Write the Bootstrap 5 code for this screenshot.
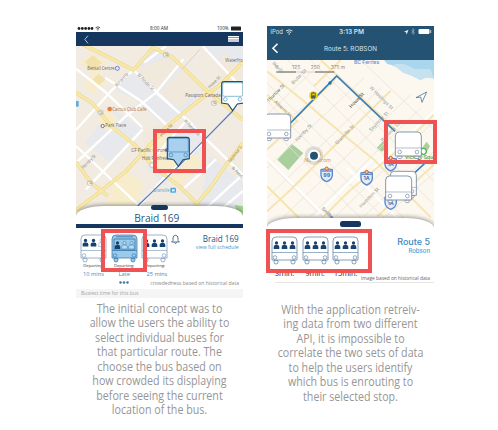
<!DOCTYPE html>
<html lang="en">
<head>
<meta charset="utf-8">
<meta name="viewport" content="width=device-width, initial-scale=1">
<title>Transit app concepts</title>
<link href="https://cdn.jsdelivr.net/npm/bootstrap@5.3.0/dist/css/bootstrap.min.css" rel="stylesheet">
<style>
body{font-family:"Open Sans","Noto Sans",sans-serif;width:498px;height:430px;overflow:hidden;background:#fff}
svg{display:block}
svg text{font-family:"Open Sans","Noto Sans",sans-serif}
.ios text{font-family:Inter,sans-serif}
.board{padding:25px 0 0 76px;gap:24px}
.concept{width:167px}
.screen{height:273px;line-height:1}
.status-a{height:7px}
.bar-a{height:14px;background:#14365f}
.menu-bars{margin-right:-4px}
.map-a{height:160px}
.map-b{height:158px}
.bar-b{height:34px;margin-top:1px;background:#235273}
.sheet{border-radius:28px 28px 0 0/10px 10px 0 0;background:#fff;box-shadow:0 -1px 4px #0006;clip-path:inset(-5px 0 0 0)}
.sheet-b{height:66px;padding-top:3px}
.handle{width:17px;height:4.5px;border-radius:2.5px;background:#14365f}
.handle-a{margin-bottom:-.5px;transform:translateY(-1px)}
.handle-b{width:21px;height:5.5px}
.sheet-title{font-size:11.3px;color:#265782;height:13.5px;line-height:16px;padding-right:6px;transform:scaleX(.9)}
.rule-a{height:4.5px;background:#14365f}
.info-a{height:61px;padding:6px 4px 0 4px}
.busiest{height:9px;line-height:9px;font-size:5.1px;background:#f5f5f5;color:#a3a3a3;padding-left:5px}
.departure{width:27px;margin-right:3.7px}
.departure svg{width:27px;height:29px}
.departure svg.dots{width:10px;height:3px;margin:2px 8px}
.dep-label{font-size:4.2px;line-height:6px;color:#333;white-space:nowrap}
.dep-time{font-size:5.7px;line-height:10px;color:#3c8dc4;white-space:nowrap}
.bell{margin-left:-1px}
.right-a{font-size:9px;color:#265782;transform:scaleX(.9);transform-origin:right}
.right-a small{font-size:5.8px;color:#3f97cc;margin-top:1.5px}
.note{font-size:5.05px;color:#888}
.note-a{bottom:-1px}
.note-b{top:49px;padding-right:4px;font-size:4.85px;color:#666}
.frame{position:absolute;border:4px solid #ee5253}
.fr1{left:77px;top:104px;width:53px;height:44px}
.fr2{left:25px;top:204px;width:46px;height:43px}
.fr3{left:117px;top:94px;width:53px;height:44px}
.fr4{left:-1px;top:203px;width:106px;height:44px}
.info-b{padding:9px 4px 0 4px;height:55px}
.dep-b{width:27px;margin-right:3.5px}
.dep-b svg{width:27px;height:30px}
.min-b{font-size:7.6px;line-height:9px;margin-top:3.5px;color:#222;letter-spacing:-.1px}
.route-b{font-size:9px;color:#3c8abd;font-family:Inter,sans-serif;font-weight:500;padding-top:1px}
.route-b small{font-size:6px;color:#3fa3da;margin-top:2.5px}
.hairline{height:1px;background:#e6e6e6;margin:0 0 0 8px}
.caption-copy{font-size:12px;line-height:14.45px;color:#969696;white-space:nowrap;margin:4px -30px 0;transform:scaleX(.89)}
</style>
<script src="https://cdn.jsdelivr.net/npm/bootstrap@5.3.0/dist/js/bootstrap.bundle.min.js"></script>
</head>
<body>
<svg width="0" height="0" class="position-absolute" aria-hidden="true">
<defs>
<g id="person"><circle cx="3" cy="2" r="1.65"/><path d="M.2 8V5.7Q.2 4 2 4H4Q5.8 4 5.8 5.7V8Z"/></g>
<g id="shell"><path d="M1 24V5Q1 1 5 1H22Q26 1 26 5V24Z" stroke-width=".7"/><path d="M1 16.5H26" stroke-width=".6"/><circle cx="4" cy="21.5" r="1.8" stroke-width=".6"/><circle cx="23" cy="21.5" r="1.8" stroke-width=".6"/><path d="M3 24.5h4v1.5q0 2-2 2t-2-2zM20 24.5h4v1.5q0 2-2 2t-2-2z" stroke-width=".7"/></g>
<g id="full"><use href="#person" x="2.500" y="5"/><use href="#person" x="10.500" y="5"/><use href="#person" x="18.500" y="5"/></g>
<g id="mapbus"><path d="M1 73V13Q1 1 13 1H67Q79 1 79 13V73Z" stroke-width="2.600"/><path d="M1 49H79" stroke-width="1.600"/><circle cx="14" cy="61" r="5.500" stroke-width="2"/><circle cx="66" cy="61" r="5.500" stroke-width="2"/><path d="M8 74h13v3q0 4-6 4t-7-4zM59 74h13v3q0 4-6 4t-7-4z" stroke-width="2.200"/></g>
<g id="pin"><path d="M9 2H61Q68 2 68 9V66L49 69 35 89 21 69 2 66V9Q2 2 9 2Z" stroke="#234d72" stroke-width="3.400"/><rect x="5" y="5" width="60" height="41" rx="5" stroke-width="2"/><circle cx="13" cy="55" r="5.500" stroke-width="2"/><circle cx="57" cy="55" r="5.500" stroke-width="2"/></g>
<g id="shield"><path d="M-17-12Q0-17 17-12V5Q15 19 0 24Q-15 19-17 5Z" fill="#e4ecf8" stroke="#5a86ca" stroke-width="4"/><path d="M-15-8H15" stroke="#5a86ca" stroke-width="4"/><circle cy="-15" r="5" fill="#f0ce70" stroke="#dd5948" stroke-width="3"/></g>
</defs>
</svg>
<main class="board d-flex align-items-start">
<section class="concept">
 <div class="screen position-relative">
  <div class="status-a"><svg width="167" height="7" viewBox="76 25 167 7"><g fill="#222"><circle cx="79" cy="28.500" r="1.400"/><circle cx="82.300" cy="28.500" r="1.400"/><circle cx="85.600" cy="28.500" r="1.400"/><circle cx="88.900" cy="28.500" r="1.400"/><circle cx="92" cy="28.500" r="1.400"/><rect x="231" y="26.500" width="10" height="4" rx=".5"/><text x="150" y="30.300" font-size="5.400" textLength="18" lengthAdjust="spacingAndGlyphs">8:00 AM</text><text x="217" y="30.300" font-size="5.400" textLength="11.500" lengthAdjust="spacingAndGlyphs">100%</text></g><path d="M95.500 27.800q2.300-2 4.600 0M96.600 29q1.200-1 2.400 0M97.800 29.500v1" fill="none" stroke="#222" stroke-width=".8"/></svg></div>
  <nav class="bar-a d-flex justify-content-between align-items-center px-2"><svg width="5" height="9"><path d="M4 .7.800 4.500 4 8.300" fill="none" stroke="#c4d3e2" stroke-width=".9"/></svg><svg class="menu-bars" width="11" height="6"><path d="M0 0h11v1.600H0zM0 2.100h11v1.600H0zM0 4.200h11v1.600H0z" fill="#fff"/></svg></nav>
  <div class="map-a"><svg width="167" height="178" viewBox="0 0 501 534">
   <rect width="501" height="534" fill="#f1ebe1"/>
   <path d="M172 72 232 5 285 30 385 128 330 190 260 235 172 155 105 130ZM110 190l90 60-95 100-80-60ZM380 0H501V130ZM330 220l75 60-140 140-55-60ZM400 330l100 80v124H360Z" fill="#e7e9ed"/>
   <path d="M172 72 285 30 310 50 240 140ZM200 255l60-22 40 30-90 90ZM330 62l50 60-70 65-60-48ZM440 20l61 50v90l-80-50Z" fill="#f1e9dc"/>
   <path d="M12 50l38-32 45 34-38 42ZM20 118l42-38 30 26-42 38ZM72 205l28-14 24 26-6 28-28 8-22-24ZM215 310l58-58 110 95-70 70-62-40ZM105 425l40-48 58 30-20 76H90Z" fill="#f7edcd"/>
   <path d="M26 48l25-20 26 22-25 25ZM50 100l18-16 20 16-19 19Z" fill="#f3e1ab"/>
   <path d="M172 72 330 220 501 387M322 40 240 140 148 212 0 350M172 72 110 130 0 252M88 95l107 70 75 70M0 68l88 70 110 105M200 250 30 430M380 0 501 130M501 385 395 482M240 140l110 96M390 282 260 400 190 480M330 225 220 350M0 300l190 180M420 340l-100 90M270 0l-65 50M501 435l-60 50" fill="none" stroke="#fff" stroke-width="7"/>
   <g fill="none" stroke-linejoin="round"><path id="avenues" d="M22-4 110 40 172 72 232 5 288 32 385 128 501 222M0 140 50 172 105 240 180 300 235 365 310 420 372 482M501 48 430 118 350 178 275 240 210 310 150 375 62 445 0 492M501 290 455 350 400 430 355 480M0 348 45 410 95 450" stroke="#ecd890" stroke-width="10"/><use href="#avenues"/><path d="M22-4 110 40 172 72 232 5 288 32 385 128 501 222M0 140 50 172 105 240 180 300 235 365 310 420 372 482M501 48 430 118 350 178 275 240 210 310 150 375 62 445 0 492M501 290 455 350 400 430 355 480M0 348 45 410 95 450" stroke="#f9e9a9" stroke-width="7"/><path d="M320 68 372 10" stroke="#c3c7c5" stroke-width="2"/><path d="M185 480 307 361 470 195" stroke="#5c7abd" stroke-width="3.600"/></g>
   <g font-size="14" fill="#67656a"><text x="34" y="72" textLength="82" lengthAdjust="spacingAndGlyphs">Bentall Centre</text><text x="109" y="194" fill="#a9683f" textLength="102" lengthAdjust="spacingAndGlyphs">Cactus Club Cafe</text><text x="88" y="244" textLength="63" lengthAdjust="spacingAndGlyphs">Park Place</text><text x="328" y="152" textLength="106" lengthAdjust="spacingAndGlyphs">Passport Canada</text><text x="166" y="317" textLength="106" lengthAdjust="spacingAndGlyphs">CF Pacific Centre</text><text x="198" y="342" textLength="79" lengthAdjust="spacingAndGlyphs">Holt Renfrew</text><text x="448" y="49" textLength="52" lengthAdjust="spacingAndGlyphs">Waterfro</text><text x="232" y="438" fill="#55a5ca" textLength="48" lengthAdjust="spacingAndGlyphs">Granville</text></g>
   <g font-size="13.500" fill="#7a7a7a"><text transform="translate(122 123) rotate(-45)" textLength="52" lengthAdjust="spacingAndGlyphs">Burrard St</text><text transform="translate(183 88) rotate(45)" textLength="64" lengthAdjust="spacingAndGlyphs">W Pender St</text><text transform="translate(401 128) rotate(-45)" textLength="46" lengthAdjust="spacingAndGlyphs">Howe St</text><text transform="translate(257 273) rotate(-45)" fill="#8e7442" textLength="48" lengthAdjust="spacingAndGlyphs">Howe St</text><text transform="translate(323 226) rotate(45)" textLength="62" lengthAdjust="spacingAndGlyphs">W Pender St</text><text transform="translate(22 369) rotate(-45)" textLength="54" lengthAdjust="spacingAndGlyphs">Hornby St</text><text transform="translate(463 350) rotate(-53)" fill="#8e7442" textLength="58" lengthAdjust="spacingAndGlyphs">Seymour S</text><text transform="translate(466 367) rotate(45)" textLength="40" lengthAdjust="spacingAndGlyphs">W Pend</text></g>
   <circle cx="124" cy="67" r="6" fill="#e9edff" stroke="#6b80d0" stroke-width="3"/><circle cx="101" cy="189" r="7" fill="#ef7d36"/><circle cx="80" cy="240" r="5" fill="#fff" stroke="#8d665d" stroke-width="3"/><circle cx="272" cy="312" r="5" fill="#5872cf"/><rect x="283" y="425" width="17" height="15" rx="3" fill="#49ade0"/><path d="M288 430h8v6h-8z" fill="#e8f6fd"/><rect y="165" width="8" height="17" fill="#5aafdb"/><path d="M498 530h3v-50l-25-3z" fill="#a7d58c"/>
   <g fill="#faf9f4" stroke="#b3b09f" stroke-width="2"><rect x="262" y="20" width="16" height="13" rx="6"/><rect x="66" y="193" width="16" height="13" rx="6"/><rect x="406" y="165" width="16" height="13" rx="6"/><rect x="221" y="351" width="16" height="13" rx="6"/><rect x="34" y="405" width="16" height="13" rx="6"/></g><g font-size="9" fill="#777" text-anchor="middle"><text x="270" y="30">7A</text><text x="74" y="203">7A</text><text x="414" y="175">7A</text><text x="42" y="415">1A</text></g>
   <use href="#pin" x="435" y="105" fill="#fff" stroke="#5199c6"/><use href="#pin" x="272" y="272" fill="#a9d1ee" stroke="#3d83b8"/>
  </svg></div>
  <div class="sheet position-relative">
   <div class="handle handle-a mx-auto"></div>
   <div class="sheet-title text-center">Braid 169</div>
   <div class="rule-a"></div>
   <div class="info-a d-flex position-relative">
    <div class="departure text-center"><svg viewBox="0 0 27 29"><g fill="#fff" stroke="#7294b4"><use href="#shell"/></g><g fill="#17416e"><use href="#person" x="2.500" y="4.500"/><use href="#person" x="10.500" y="4.500"/></g><use href="#person" x="18.500" y="4.500" fill="none" stroke="#7ba1c2" stroke-width=".5"/></svg><div class="dep-label">Departing:</div><div class="dep-time">10 mins</div></div>
    <div class="departure text-center"><svg viewBox="0 0 27 29"><g fill="#9bcbeb" stroke="#2e70a5"><use href="#shell"/></g><path d="M5 2.800H22M3 5h21v11H3z" fill="none" stroke="#26679d" stroke-width=".7"/><use href="#person" x="3.500" y="7" fill="#17416e"/><g fill="#b8dcf3" stroke="#2e70a5" stroke-width=".5"><use href="#person" x="10.500" y="7"/><use href="#person" x="17.500" y="7"/></g></svg><div class="dep-label">Departing:</div><div class="dep-time">Late</div><svg class="dots" viewBox="0 0 10 3"><g fill="#47708f"><circle cx="1.500" cy="1.500" r="1.200"/><circle cx="5" cy="1.500" r="1.300" fill="#2687bf"/><circle cx="8.500" cy="1.500" r="1.200"/></g></svg></div>
    <div class="departure text-center"><svg viewBox="0 0 27 29"><g fill="#fff" stroke="#7294b4"><use href="#shell"/></g><use href="#full" fill="#17416e"/></svg><div class="dep-label">Departing:</div><div class="dep-time ps-1">25 mins</div></div>
    <svg width="9" height="11" viewBox="0 0 9 11" class="bell flex-shrink-0"><path d="M.6 8h7.800L7 6.500V4Q7 1.500 4.500 1.200 2 1.500 2 4v2.500zM3.300 8.500q1.200 2 2.400 0" fill="none" stroke="#294e70" stroke-width=".8"/></svg>
    <div class="right-a ms-auto text-end text-nowrap align-self-start">Braid 169<small class="d-block">view full schedule</small></div>
    <div class="note note-a position-absolute end-0 pe-1 pb-1">crowdedness based on historical data</div>
   </div>
   <div class="busiest">Busiest time for this bus</div>
  </div>
  <div class="frame fr1"></div><div class="frame fr2"></div>
 </div>
 <p class="caption-copy text-center">The initial concept was to<br>allow the users the ability to<br>select individual buses for<br>that particular route. The<br>choose the bus based on<br>how crowded its displaying<br>before seeing the current<br>location of the bus.</p>
</section>
<section class="concept">
 <div class="screen position-relative">
  <nav class="bar-b d-flex"><svg class="ios" width="167" height="34" viewBox="267 26 167 34"><g fill="#d8e3eb"><text x="270.500" y="33.800" font-size="6" textLength="12.500" lengthAdjust="spacingAndGlyphs">iPod</text><text x="339" y="34" font-size="6.500" font-weight="600" textLength="25" lengthAdjust="spacingAndGlyphs">3:13 PM</text><text x="324" y="51.200" font-size="5.900" textLength="53" lengthAdjust="spacingAndGlyphs">Route 5: ROBSON</text></g><path d="M286 31q3.200-2.500 6.400 0M287.300 32.500q1.900-1.500 3.800 0" fill="none" stroke="#d8e3eb" stroke-width="1"/><circle cx="289.200" cy="34" r=".8" fill="#d8e3eb"/><path d="M277.500 43.700 273 48.200 277.500 52.700" fill="none" stroke="#fff" stroke-width="1.600"/><path d="M404 31.800l4.500-2-1.800 4.700-.7-2.200z" fill="#eee"/><path d="M411.500 30l3 3-1.500 1.500V28.500l1.500 1.500-3 3" fill="none" stroke="#a5bdcc" stroke-width=".6"/><rect x="418.500" y="29" width="11" height="5" rx="1" fill="#fff"/><path d="M430.700 30v3" stroke="#c4d1da"/></svg></nav>
  <div class="map-b"><svg class="ios" width="167" height="175" viewBox="9 6 501 525">
   <rect width="520" height="540" fill="#fcf8ef"/>
   <path d="M360 6H510V60Q490 52 470 66L440 52 418 44Q395 22 370 18Z" fill="#a9d5ed"/><path d="M388 20Q415 10 450 32l50 2 10 30q-22-10-40 2l-30-14-22-8Z" fill="#c6e2f0"/>
   <path d="M40 305 83 257 118 285 73 336ZM338 270l20-21 12 20-16 12ZM470 275l18-24 10 14-16 26Z" fill="#a9cf9d"/>
   <g fill="none" stroke="#e9e5db" stroke-width="2.500"><path d="M9 75 430 490M9 130 370 490M9 200 300 490M9 310 190 490M70 6 510 440M140 6 510 370M290 6 510 215M9 170 170 15M9 235 215 70M9 330 300 60M9 420 350 90M60 475 440 110M140 475 470 150M215 475 510 190M300 475 510 280M365 475 510 345"/></g>
   <path d="M9 300l190 190M410 490 250 330M330 300 155 475M510 160 330 330" fill="none" stroke="#fff" stroke-width="6"/>
   <g fill="none" stroke="#f6e5b4" stroke-width="6"><path d="M9 40 120 130 240 232 330 305 500 478M170 6 355 178 510 325M9 385 105 480M9 110 100 190 9 275M215 60 100 175M380 98 240 235 80 395 9 460M510 170 400 278 255 400 180 475M340 475 510 320M230 6 150 85"/></g>
   <path d="M60 215 218 54 393 220M460 300l20 18-30 28" fill="none" stroke="#3981b8" stroke-width="5"/>
   <circle cx="198" cy="75" r="5" fill="#2373a6"/>
   <g stroke-width="5"><path d="M37 42H96M153 42h58" stroke="#888"/><path d="M96 42h57" stroke="#e6e2da"/></g>
   <g font-size="13.500" fill="#888"><text x="34" y="33">0</text><text x="84" y="33" textLength="25" lengthAdjust="spacingAndGlyphs">125</text><text x="140" y="33" textLength="28" lengthAdjust="spacingAndGlyphs">250</text><text x="200" y="33" textLength="43" lengthAdjust="spacingAndGlyphs">375 m</text><text x="270" y="18" fill="#6895d0" font-weight="600" textLength="76" lengthAdjust="spacingAndGlyphs">BC Ferries</text></g>
   <g font-size="14" fill="#999"><text transform="translate(14 134) rotate(-46)" fill="#666" textLength="70" lengthAdjust="spacingAndGlyphs">Thurlow St</text><text transform="translate(30 133) rotate(44)" textLength="65" lengthAdjust="spacingAndGlyphs">Alberni St</text><text transform="translate(262 151) rotate(-47)" fill="#444" textLength="57" lengthAdjust="spacingAndGlyphs">Howe St</text><text transform="translate(316 90) rotate(45)" textLength="93" lengthAdjust="spacingAndGlyphs">W Hastings St</text><text transform="translate(99 251) rotate(-46)" textLength="66" lengthAdjust="spacingAndGlyphs">Hornby St</text><text transform="translate(219 261) rotate(-46)" textLength="76" lengthAdjust="spacingAndGlyphs">Granville St</text><text transform="translate(321 221) rotate(-46)" textLength="76" lengthAdjust="spacingAndGlyphs">Seymour St</text><text transform="translate(356 252) rotate(-46)" textLength="74" lengthAdjust="spacingAndGlyphs">Richards St</text><text transform="translate(292 450) rotate(-46)" textLength="78" lengthAdjust="spacingAndGlyphs">Hamilton St</text><text transform="translate(172 453) rotate(45)" fill="#666" textLength="44" lengthAdjust="spacingAndGlyphs">Smithe</text><text transform="translate(88 80) rotate(-46)" textLength="58" lengthAdjust="spacingAndGlyphs">Bute St</text><text transform="translate(24 17) rotate(45)" textLength="42" lengthAdjust="spacingAndGlyphs">Melville</text><text x="121" y="312" fill="#e2a05a" textLength="80" lengthAdjust="spacingAndGlyphs">Nordstrom</text><text x="422" y="303" fill="#52a568" font-weight="600" textLength="86" lengthAdjust="spacingAndGlyphs">Victory Squ</text></g>
   <circle cx="148" cy="113" r="13" fill="#f0d51e"/><path d="M141 105q7-4 14 0v15h-3v3h-3v-3h-3v3h-3v-3h-2z" fill="#4e5e58"/><path d="M143 107h10v5h-10z" fill="#d8c72d"/>
   <circle cx="150" cy="293" r="28" fill="#8c9ba2" opacity=".28"/><circle cx="150" cy="293" r="18" fill="#fff"/><circle cx="150" cy="293" r="12" fill="#235273"/><path d="M163 277q10 5 8 17" stroke="#e9b36b" stroke-width="3" fill="none"/>
   <path d="M456 119 488 102 474 133 470 117Z" fill="#fff" stroke="#4d7c98" stroke-width="2.500" stroke-linejoin="round"/>
   <use href="#shield" x="188" y="347"/><use href="#shield" x="308" y="357"/><use href="#shield" x="380" y="315"/><use href="#shield" x="380" y="430"/><g font-size="16" font-weight="700" fill="#4676b8" text-anchor="middle"><text x="188" y="357">99</text><text x="308" y="367">1A</text><text x="380" y="325">1A</text><text x="380" y="441">1A</text></g>
   <circle cx="478" cy="280" r="9" fill="#fff" stroke="#4fb75b" stroke-width="4"/>
   <g fill="#fff" stroke="#7486a0"><use href="#mapbus" x="1" y="167"/><use href="#mapbus" x="393" y="221"/><use href="#mapbus" x="378" y="339"/><use href="#mapbus" x="364" y="353"/></g>
  </svg></div>
  <div class="sheet sheet-b position-relative">
   <div class="handle handle-b mx-auto"></div>
   <div class="info-b d-flex position-relative">
    <div class="dep-b text-center"><svg viewBox="0 0 27 30"><g fill="#fff" stroke="#52779b"><use href="#shell"/></g><use href="#full" fill="#17416e"/></svg><div class="min-b">3min.</div></div>
    <div class="dep-b text-center"><svg viewBox="0 0 27 30"><g fill="#fff" stroke="#52779b"><use href="#shell"/></g><use href="#full" fill="#17416e"/></svg><div class="min-b">9min.</div></div>
    <div class="dep-b text-center"><svg viewBox="0 0 27 30"><g fill="#fff" stroke="#52779b"><use href="#shell"/></g><use href="#full" fill="#17416e"/></svg><div class="min-b">15min.</div></div>
    <div class="route-b ms-auto text-end text-nowrap">Route 5<small class="d-block">Robson</small></div>
    <div class="note note-b position-absolute end-0 text-nowrap">Image based on historical data</div>
   </div>
   <div class="hairline"></div>
  </div>
  <div class="frame fr3"></div><div class="frame fr4"></div>
 </div>
 <p class="caption-copy text-center">With the application retreiv-<br>ing data from two different<br>API, it is impossible to<br>correlate the two sets of data<br>to help the users identify<br>which bus is enrouting to<br>their selected stop.</p>
</section>
</main>
</body>
</html>
